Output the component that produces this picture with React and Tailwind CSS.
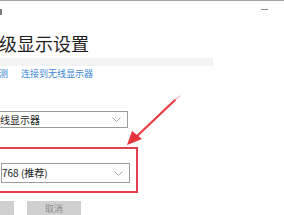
import React from 'react';

const FONT = { fontFamily: '"Noto Sans CJK SC", "Noto Sans", sans-serif' };

// Pale chevron at the right of each select box
const Chevron = () => (
  <svg width="9" height="5" viewBox="0 0 9 5" className="mr-[3px]">
    <path d="M0.5 0.5 L4.5 4.5 L8.5 0.5" fill="none" stroke="#a8a8a8" strokeWidth="1" />
  </svg>
);

const Select = ({ label, className }) => (
  <div className={`w-[129px] ml-[-1px] flex items-center justify-between border border-[#9c9c9c] bg-white pr-[3px] ${className}`}>
    <span className="text-[10px] leading-[12px] text-[#222]">{label}</span>
    <Chevron />
  </div>
);

export default function App() {
  return (
    <div className="relative w-[284px] h-[215px] overflow-hidden bg-white border-t border-[#a6a6a6]" style={FONT}>
      {/* window title strip */}
      <div className="h-[20px] flex items-start justify-between">
        <div className="mt-[8px] w-[2px] h-[6px] bg-[#7a7a7a]" />
        <div className="mt-[8px] mr-[16px] w-[7px] h-[1px] bg-[#8a8a8a]" />
      </div>

      {/* page heading */}
      <h1 className="mt-[12px] h-[20px] ml-[-1px] text-[18px] leading-[20px] font-normal text-[#1e1e1e] whitespace-nowrap">
        级显示设置
      </h1>

      {/* grey band under heading */}
      <div className="mt-[5px] w-[213px] h-[8px] bg-[#f3f3f3]" />

      {/* links */}
      <div className="mt-[2px] flex items-center gap-[13px] text-[9px] leading-[12px] text-[#3a86d4] whitespace-nowrap">
        <span className="ml-[-1px]">测</span>
        <span>连接到无线显示器</span>
      </div>

      {/* display select */}
      <Select label="线显示器" className="mt-[31px] h-[17px]" />

      {/* highlighted resolution block */}
      <div className="mt-[19px] ml-[-2px] w-[140px] h-[46px] border-2 border-[#e2404c] pt-[14px]">
        <Select label="768 (推荐)" className="h-[20px] ml-[1px]" />
      </div>

      {/* buttons */}
      <div className="mt-[8px] flex gap-[13px]">
        <div className="w-[14px] h-[14px] bg-[#d0d0d0]" />
        <div className="w-[54px] h-[14px] bg-[#d0d0d0] flex justify-center pt-[3px] text-[9px] leading-[10px] text-[#8d8d8d]">
          取消
        </div>
      </div>

      {/* red annotation arrow */}
      <svg className="absolute left-[120px] top-[92px]" width="64" height="58" viewBox="0 0 64 58">
        <path d="M55 7 L16 44" stroke="#e8323c" strokeWidth="2.2" strokeLinecap="round" opacity="0.95" />
        <path d="M55 7 L60 3" stroke="#f29aa0" strokeWidth="1" strokeLinecap="round" />
        <path d="M7 52 L12 38 L22 46 Z" fill="#e8323c" />
      </svg>
    </div>
  );
}
